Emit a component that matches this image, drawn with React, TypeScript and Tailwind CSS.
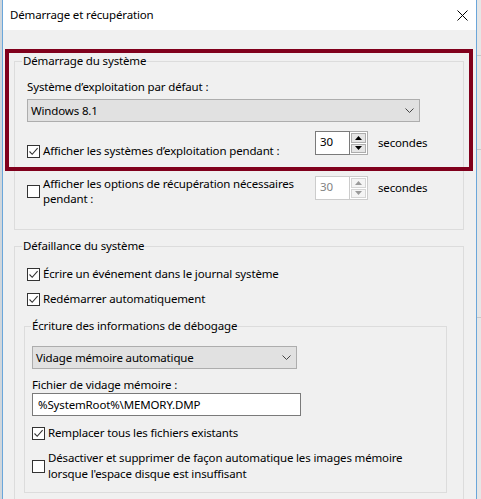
import React from "react";

function Check({ checked }: { checked?: boolean }) {
  return (
    <span className="w-[13px] h-[13px] shrink-0 border border-[#333333] bg-white flex items-center justify-center">
      {checked && (
        <svg width="11" height="11" viewBox="0 0 11 11">
          <path d="M1.5 5.5 L4.2 8.3 L9.6 2.2" stroke="#333333" strokeWidth="1.1" fill="none" />
        </svg>
      )}
    </span>
  );
}

function Chevron() {
  return (
    <svg width="9" height="6" viewBox="0 0 9 6">
      <path d="M0.5 0.5 L4.5 4.5 L8.5 0.5" stroke="#444444" strokeWidth="1" fill="none" />
    </svg>
  );
}

function Spin({ disabled }: { disabled?: boolean }) {
  const tri = disabled ? "#9a9a9a" : "#000000";
  return (
    <div className="flex h-[24px] w-[53px] shrink-0">
      <div
        className={
          disabled
            ? "w-[35px] h-full border border-[#cccccc] bg-white text-[#838383] pl-[4px] leading-[20px]"
            : "w-[35px] h-full border border-[#7a7a7a] bg-white text-black pl-[4px] leading-[20px]"
        }
      >
        30
      </div>
      <div
        className={
          disabled
            ? "w-[18px] h-full border border-l-0 border-[#cccccc] bg-white flex flex-col gap-[1px] p-[1px]"
            : "w-[18px] h-full border border-l-0 border-[#adadad] bg-white flex flex-col gap-[1px] p-[1px]"
        }
      >
        <div
          className={
            disabled
              ? "flex-1 border border-[#d5d5d5] bg-[#f4f4f4] flex items-center justify-center"
              : "flex-1 border border-[#adadad] bg-[#e5e5e5] flex items-center justify-center"
          }
        >
          <svg width="7" height="4" viewBox="0 0 7 4">
            <path d="M0 4 L3.5 0 L7 4 Z" fill={tri} />
          </svg>
        </div>
        <div
          className={
            disabled
              ? "flex-1 border border-[#d5d5d5] bg-[#f4f4f4] flex items-center justify-center"
              : "flex-1 border border-[#adadad] bg-[#e5e5e5] flex items-center justify-center"
          }
        >
          <svg width="7" height="4" viewBox="0 0 7 4">
            <path d="M0 0 L3.5 4 L7 0 Z" fill={tri} />
          </svg>
        </div>
      </div>
    </div>
  );
}

export default function App() {
  return (
    <div className="w-[481px] h-[499px] overflow-hidden flex bg-[#dcdcdc] text-[11.5px] tracking-[-0.15px] text-black font-['Noto_Sans',sans-serif] leading-[16px]">
      <div className="w-[2px] shrink-0 bg-[#cfd6dc]" />

      {/* dialog window */}
      <div className="w-[475px] shrink-0 flex flex-col border-x border-[#6aa6da] relative">
        <div className="h-[30px] shrink-0 bg-white flex items-center justify-between pl-[7px] pr-[8px]">
          <span>Démarrage et récupération</span>
          <svg width="11" height="11" viewBox="0 0 11 11">
            <path d="M0.5 0.5 L10.5 10.5 M10.5 0.5 L0.5 10.5" stroke="#000000" strokeWidth="1" />
          </svg>
        </div>

        <div className="flex-1 bg-[#f0f0f0] flex flex-col">
          {/* Démarrage du système */}
          <fieldset className="ml-[11px] w-[450px] mt-[23px] border border-[#dcdcdc] pb-[23px]">
            <legend className="ml-[7px] px-[1px] leading-[16px]">Démarrage du système</legend>
            <div className="ml-[12px] mt-[10px]">Système d’exploitation par défaut :</div>
            <div className="ml-[12px] mt-[4px] w-[393px] h-[23px] border border-[#adadad] bg-[#e1e1e1] flex items-center justify-between pl-[3px] pr-[5px]">
              <span>Windows 8.1</span>
              <Chevron />
            </div>
            <div className="ml-[12px] mt-[9px] flex items-start">
              <div className="w-[288px] mt-[12px] flex items-center gap-[3px]">
                <Check checked />
                <span>Afficher les systèmes d’exploitation pendant :</span>
              </div>
              <Spin />
              <span className="ml-[10px] mt-[4px]">secondes</span>
            </div>
            <div className="ml-[12px] mt-[17px] flex items-start">
              <div className="w-[288px] flex items-center gap-[3px]">
                <Check />
                <span className="leading-[15px]">
                  Afficher les options de récupération nécessaires
                  <br />
                  pendant :
                </span>
              </div>
              <Spin disabled />
              <span className="ml-[10px] mt-[4px]">secondes</span>
            </div>
          </fieldset>

          {/* Défaillance du système */}
          <fieldset className="ml-[11px] w-[450px] mt-[8px] border border-[#dcdcdc] pb-[20px]">
            <legend className="ml-[7px] px-[1px] leading-[16px]">Défaillance du système</legend>
            <div className="ml-[12px] mt-[12px] flex items-center gap-[3px]">
              <Check checked />
              <span>Écrire un événement dans le journal système</span>
            </div>
            <div className="ml-[12px] mt-[9px] flex items-center gap-[3px]">
              <Check checked />
              <span>Redémarrer automatiquement</span>
            </div>

            {/* Écriture des informations de débogage */}
            <fieldset className="ml-[9px] w-[423px] mt-[11px] border border-[#dcdcdc] pb-[10px]">
              <legend className="ml-[6px] px-[1px] leading-[16px]">Écriture des informations de débogage</legend>
              <div className="ml-[7px] mt-[12px] w-[265px] h-[23px] border border-[#adadad] bg-[#e1e1e1] flex items-center justify-between pl-[3px] pr-[5px]">
                <span>Vidage mémoire automatique</span>
                <Chevron />
              </div>
              <div className="ml-[7px] mt-[8px]">Fichier de vidage mémoire :</div>
              <div className="ml-[7px] w-[269px] h-[23px] border border-[#7a7a7a] bg-white flex items-center pl-[5px]">
                %SystemRoot%\MEMORY.DMP
              </div>
              <div className="ml-[7px] mt-[9px] flex items-center gap-[3px]">
                <Check checked />
                <span>Remplacer tous les fichiers existants</span>
              </div>
              <div className="ml-[7px] mt-[9px] flex items-center gap-[3px]">
                <Check />
                <span>
                  Désactiver et supprimer de façon automatique les images mémoire
                  <br />
                  lorsque l'espace disque est insuffisant
                </span>
              </div>
            </fieldset>
          </fieldset>
        </div>

        {/* annotation frame over the first group */}
        <div className="absolute left-[2px] top-[49px] w-[468px] h-[122px] border-[4px] border-[#80001c] pointer-events-none" />
      </div>

      <div className="flex-1 bg-[#e6e6e6] flex flex-col">
        <div className="h-[56px] border-b border-[#c8c8c8]" />
        <div className="h-[94px] border-b border-[#c8c8c8]" />
        <div className="h-[168px] border-b border-[#c8c8c8]" />
      </div>
    </div>
  );
}
